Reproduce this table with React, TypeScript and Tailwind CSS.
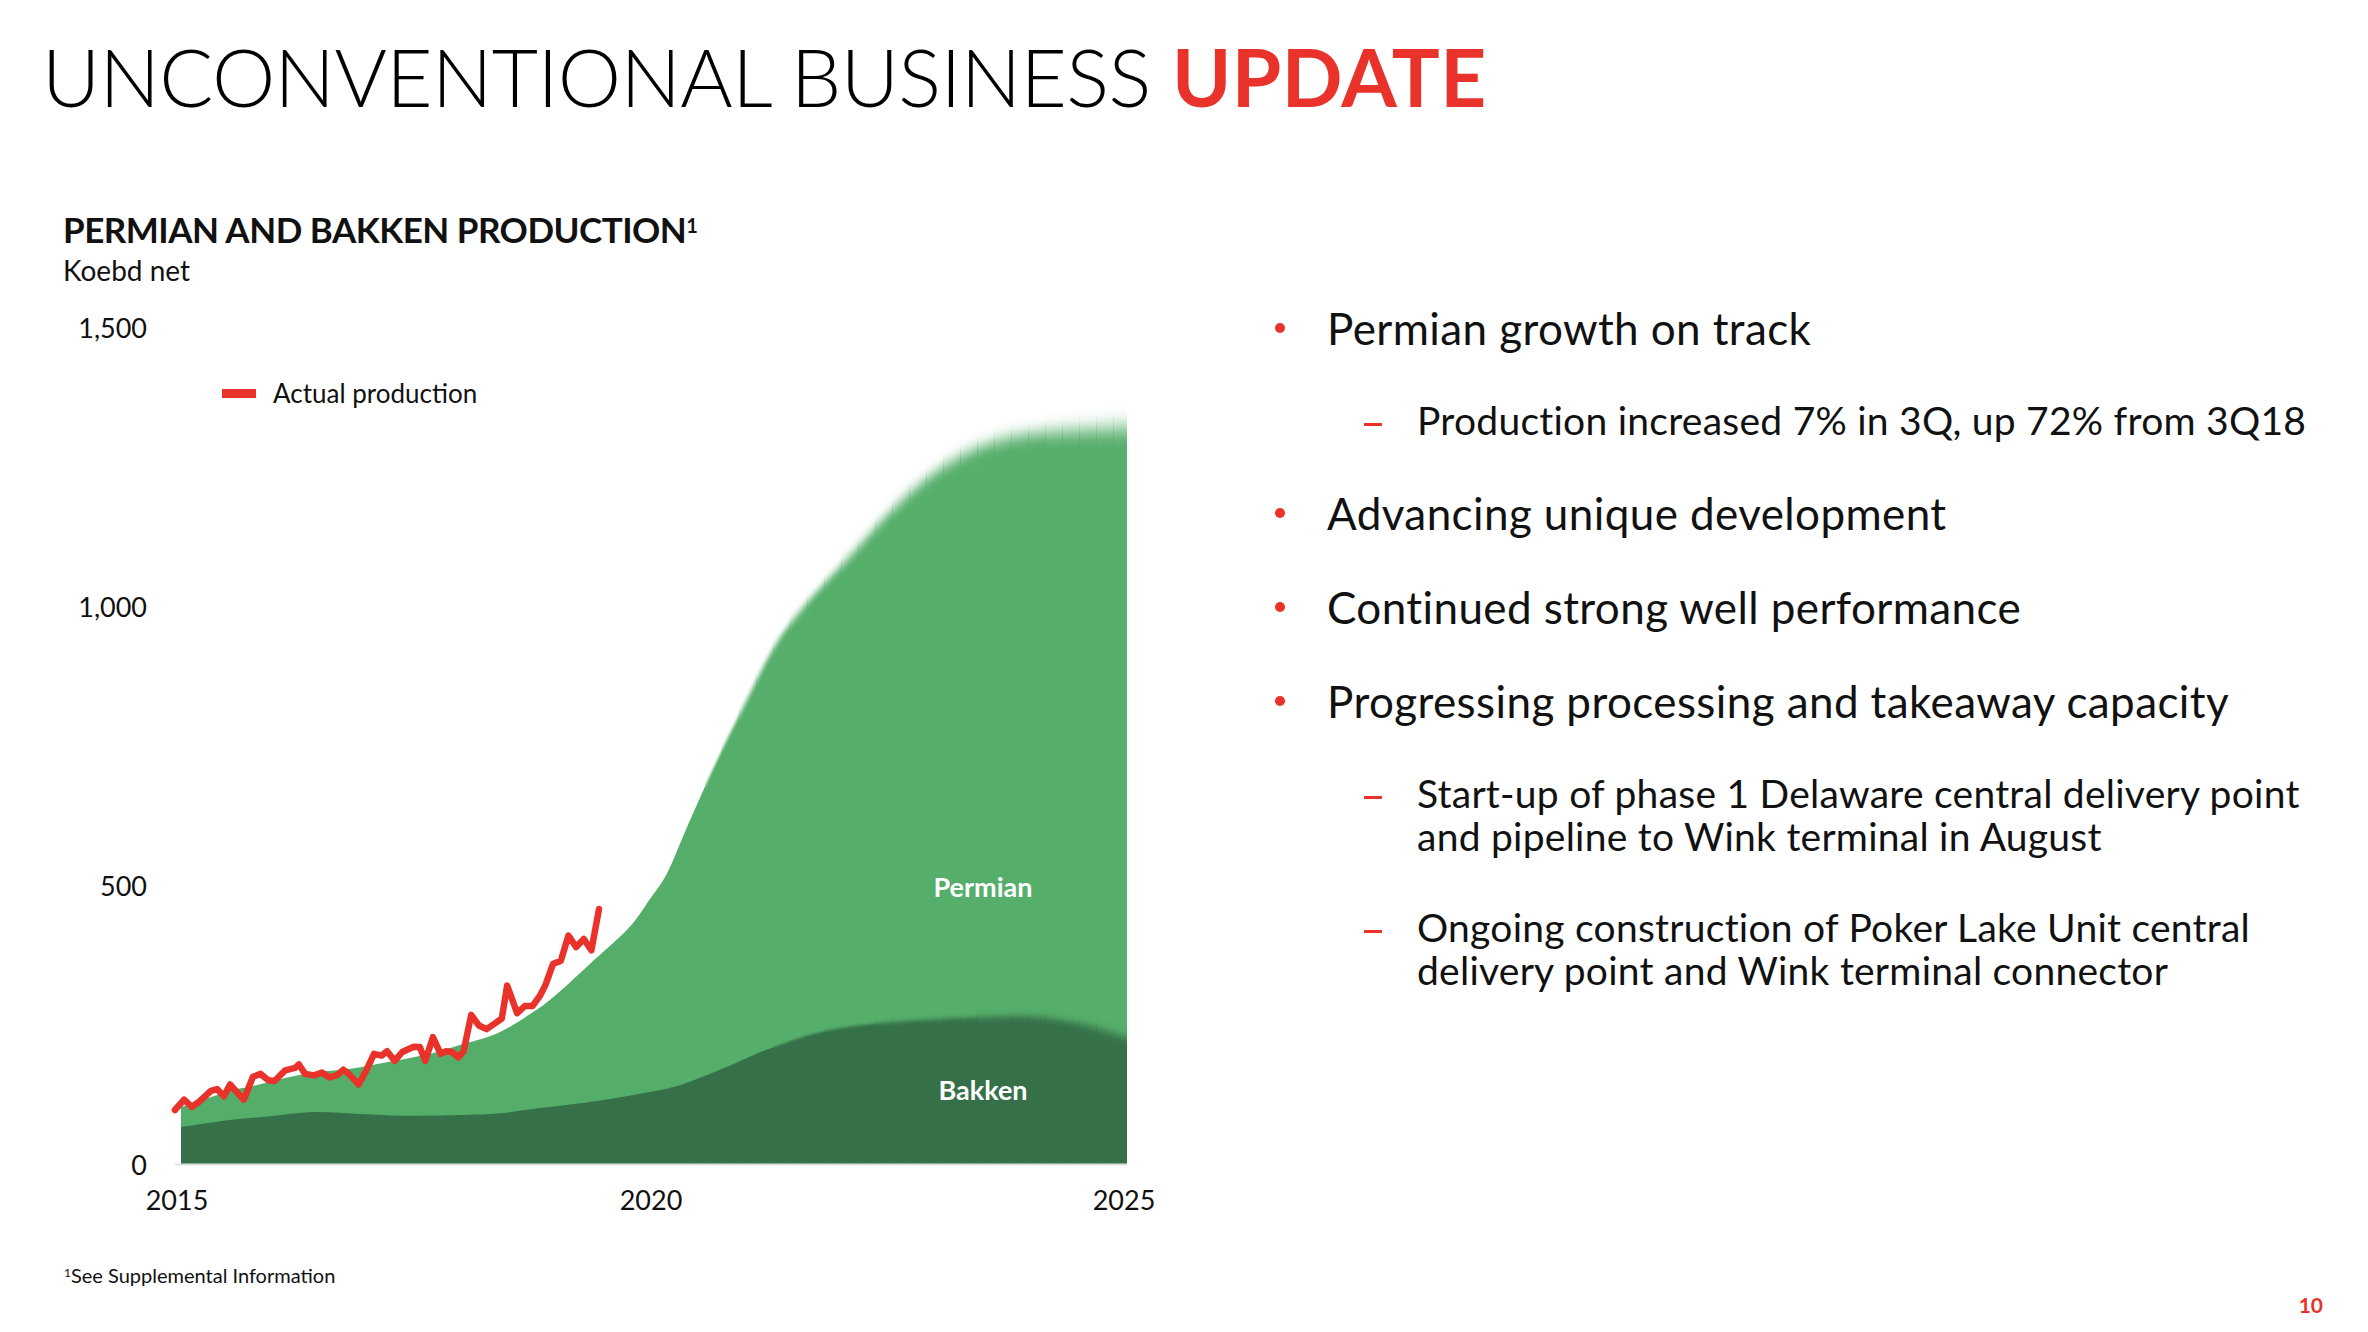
import React from "react";

type Pt = [number, number];

// chart geometry, page pixels
const X0 = 181;
const X1 = 1127;
const Y0 = 1163.5;

// traced points were measured against a slightly wider box; squeeze onto X0..X1
const sx = (pts: Pt[]): Pt[] => pts.map(([x, y]) => [X0 + (x - 181.5) * 0.9953, y]);

const permianTop: Pt[] = sx([
  [181.5, 1107], [230.8, 1091], [253.8, 1086], [307.7, 1073.6], [353.8, 1068.4],
  [384.6, 1063], [430.8, 1054], [461.5, 1045], [500, 1033], [538.5, 1010],
  [561.5, 992], [592.3, 964], [630.8, 928.6], [652, 900], [670, 873], [690, 827],
  [717, 767], [750, 700], [780, 643], [813, 600], [853, 557], [893, 513],
  [933, 477], [973, 452], [1013, 438], [1057, 432], [1132, 428],
]);

const bakkenTop: Pt[] = sx([
  [181.5, 1127], [230.8, 1120], [269, 1116.4], [315, 1112], [361.5, 1114],
  [407.7, 1115.7], [492, 1114], [538.5, 1108.6], [592, 1102], [638.5, 1094.5],
  [680.8, 1085.7], [723, 1069.8], [769, 1050], [815, 1034.4], [861.5, 1025.6],
  [923, 1020.3], [1000, 1016.7], [1046, 1017.5], [1092, 1025.6], [1132, 1038],
]);

const actual: Pt[] = sx([
  [175.4, 1110], [184.6, 1099.7], [192.3, 1106.8], [200, 1101.5], [211.5, 1090.9],
  [217.7, 1089.1], [224.6, 1096.2], [230.8, 1084.5], [244.6, 1099.7], [253.8, 1076.8],
  [261.5, 1073.9], [269.2, 1080.3], [275.4, 1081], [286.2, 1070.4], [296.2, 1067.9],
  [300, 1064.4], [306.2, 1073.9], [315.4, 1075.4], [323.1, 1072.5], [330.8, 1077.5],
  [338.5, 1075], [344.6, 1069.7], [350, 1073.9], [360, 1084.5], [367.7, 1070.4],
  [375.4, 1053.8], [383.1, 1055.6], [388.5, 1051.3], [396.2, 1060.9], [403.8, 1052],
  [415.4, 1046.7], [421.5, 1047.1], [426.9, 1060.9], [434.6, 1037.2], [442.3, 1053.8],
  [447.7, 1051.3], [453.8, 1052], [460, 1057.3], [465.4, 1051.3], [473.1, 1014.9],
  [480.8, 1025.5], [488.5, 1029.1], [496.2, 1023.8], [503.8, 1018.5], [509.2, 985.6],
  [519.2, 1013.2], [526.9, 1006.1], [534.6, 1006.1], [542.3, 995.5], [547.7, 984.9],
  [555.4, 963.7], [563.1, 960.9], [570.8, 935.5], [578.5, 947.1], [586.2, 939],
  [593.8, 950.3], [601.5, 909],
]);

// forecast edges get softer toward 2025: thin vertical strips, blur ramps up
const SOFT_START = 688;
const STEP = 17;
const strips: { from: number; to: number; t: number }[] = [{ from: X0, to: SOFT_START, t: 0 }];
for (let x = SOFT_START; x < X1; x += STEP) {
  strips.push({ from: x, to: Math.min(x + STEP, X1), t: (x + STEP / 2 - SOFT_START) / (X1 - SOFT_START) });
}

const smooth = (pts: Pt[]) => {
  let d = `M${pts[0][0]},${pts[0][1]}`;
  for (let i = 0; i < pts.length - 1; i++) {
    const p0 = pts[i - 1] || pts[i];
    const p1 = pts[i];
    const p2 = pts[i + 1];
    const p3 = pts[i + 2] || p2;
    const c1x = p1[0] + (p2[0] - p0[0]) / 6;
    const c1y = p1[1] + (p2[1] - p0[1]) / 6;
    const c2x = p2[0] - (p3[0] - p1[0]) / 6;
    const c2y = p2[1] - (p3[1] - p1[1]) / 6;
    d += ` C${c1x},${c1y} ${c2x},${c2y} ${p2[0]},${p2[1]}`;
  }
  return d;
};

const area = (pts: Pt[]) =>
  `${smooth(pts)} L1230,${pts[pts.length - 1][1]} L1230,1270 L${pts[0][0]},1270 Z`;

const SoftArea = ({ pts, fill, id }: { pts: Pt[]; fill: string; id: string }) => {
  const d = area(pts);
  return (
    <>
      {strips.map((s, i) => (
        <g key={i} clipPath={`url(#strip${i})`}>
          <path d={d} fill={fill} filter={s.t > 0 ? `url(#${id}${i})` : undefined} />
        </g>
      ))}
    </>
  );
};

const Chart = () => {
  const yTicks = [
    { label: "1,500", y: 328 },
    { label: "1,000", y: 607 },
    { label: "500", y: 886 },
    { label: "0", y: 1165 },
  ];
  const xTicks = [
    { label: "2015", x: 177 },
    { label: "2020", x: 651 },
    { label: "2025", x: 1124 },
  ];

  return (
    <svg width="1250" height="940" viewBox="0 300 1250 940" className="block">
      <defs>
        {strips.map((s, i) => (
          <clipPath key={i} id={`strip${i}`}>
            <rect x={s.from} y={300} width={s.to - s.from + (i < strips.length - 1 ? 0.6 : 0)} height={Y0 - 300} />
          </clipPath>
        ))}
        {strips.map((s, i) => (
          <React.Fragment key={i}>
            <filter id={`perm${i}`} x="-10%" y="-10%" width="120%" height="120%">
              <feGaussianBlur stdDeviation={0.6 + s.t * 9.5} />
            </filter>
            <filter id={`bak${i}`} x="-10%" y="-10%" width="120%" height="120%">
              <feGaussianBlur stdDeviation={s.t * 4.5} />
            </filter>
          </React.Fragment>
        ))}
      </defs>

      <SoftArea pts={permianTop} fill="#54ae6a" id="perm" />
      <SoftArea pts={bakkenTop} fill="#367048" id="bak" />

      <line x1={175} y1={1164.5} x2={X1} y2={1164.5} stroke="#d9d9d9" strokeWidth={1.5} />

      <polyline
        points={actual.map((p) => p.join(",")).join(" ")}
        fill="none"
        stroke="#e8322a"
        strokeWidth={6.5}
        strokeLinejoin="round"
        strokeLinecap="round"
      />

      <g fontFamily="Lato, sans-serif" fontSize="27" fill="#111">
        {yTicks.map((t) => (
          <text key={t.label} x={147} y={t.y + 10} textAnchor="end">
            {t.label}
          </text>
        ))}
        {xTicks.map((t) => (
          <text key={t.label} x={t.x} y={1209.5} textAnchor="middle">
            {t.label}
          </text>
        ))}
      </g>

      <rect x={222} y={389} width={34} height={9} fill="#e8322a" />
      <text x={273} y={402.5} fontFamily="Lato, sans-serif" fontSize="26" fill="#111">
        Actual production
      </text>

      <g fontFamily="Lato, sans-serif" fontSize="27" fontWeight="700" fill="#fff" textAnchor="middle">
        <text x={983} y={897}>Permian</text>
        <text x={983} y={1100}>Bakken</text>
      </g>
    </svg>
  );
};

const bullets: { text: string; subs?: string[][] }[] = [
  { text: "Permian growth on track", subs: [["Production increased 7% in 3Q, up 72% from 3Q18"]] },
  { text: "Advancing unique development" },
  { text: "Continued strong well performance" },
  {
    text: "Progressing processing and takeaway capacity",
    subs: [
      ["Start-up of phase 1 Delaware central delivery point", "and pipeline to Wink terminal in August"],
      ["Ongoing construction of Poker Lake Unit central", "delivery point and Wink terminal connector"],
    ],
  },
];

export default function App() {
  return (
    <div className="relative w-[2368px] h-[1332px] overflow-hidden bg-white text-[#111] font-[Lato,sans-serif]">
      {/* HEADER */}
      <header className="h-[200px] pt-[36px] pl-[42px]">
        <h1 className="text-[80px] leading-none font-light tracking-[-0.6px] text-black">
          UNCONVENTIONAL BUSINESS{" "}
          <span className="font-bold tracking-[0.5px] text-[#e8322a]">UPDATE</span>
        </h1>
      </header>

      <div className="flex">
        {/* CHART COLUMN */}
        <section className="w-[1250px] flex flex-col">
          <div className="h-[100px] pt-[12px] pl-[63px]">
            <h2 className="text-[35px] leading-none font-bold tracking-[-0.5px]">
              PERMIAN AND BAKKEN PRODUCTION<sup className="text-[20px] font-bold">1</sup>
            </h2>
            <p className="mt-[9px] text-[28px] leading-none">Koebd net</p>
          </div>
          <Chart />
          <p className="mt-[25px] pl-[64px] text-[20px] leading-none">
            <sup className="text-[12px]">1</sup>See Supplemental Information
          </p>
        </section>

        {/* BULLETS */}
        <section className="flex-1 pt-[105px] pl-[25px]">
          <ul className="flex flex-col gap-[48px]">
            {bullets.map((b) => (
              <React.Fragment key={b.text}>
                <li className="flex items-start text-[44px] leading-[46px] tracking-[0.4px]">
                  <span className="w-[52px] shrink-0 pt-[18px]">
                    <span className="block w-[10px] h-[10px] rounded-full bg-[#e8322a]" />
                  </span>
                  <span>{b.text}</span>
                </li>
                {b.subs?.map((lines) => (
                  <li key={lines[0]} className="flex items-start pl-[89px] text-[39px] leading-[43px] tracking-[0.25px]">
                    <span className="w-[53px] shrink-0 pt-[24px]">
                      <span className="block w-[18px] h-[3px] bg-[#e8322a]" />
                    </span>
                    <span>
                      {lines.map((l, i) => (
                        <React.Fragment key={i}>
                          {i > 0 && <br />}
                          {l}
                        </React.Fragment>
                      ))}
                    </span>
                  </li>
                ))}
              </React.Fragment>
            ))}
          </ul>
        </section>
      </div>

      <span className="absolute right-[45px] bottom-[17px] text-[21px] leading-none font-bold text-[#e8322a]">
        10
      </span>
    </div>
  );
}
